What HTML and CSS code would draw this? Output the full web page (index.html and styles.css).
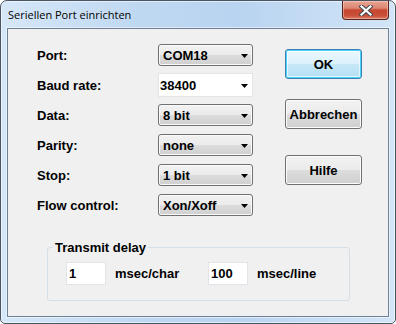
FILE: index.html
```html
<!DOCTYPE html>
<html>
<head>
<meta charset="utf-8">
<link rel="stylesheet" href="styles.css">
</head>
<body>
<div class="window">
  <div class="titlebar">
    <span class="title">Seriellen Port einrichten</span>
    <div class="close">
      <svg width="14" height="11" viewBox="0 0 14 11">
        <path d="M2.5 1.5 L11.5 9.5 M11.5 1.5 L2.5 9.5" stroke="#3d4650" stroke-width="4.2" stroke-linecap="square" fill="none"/>
        <path d="M2.5 1.5 L11.5 9.5 M11.5 1.5 L2.5 9.5" stroke="#ffffff" stroke-width="2.2" stroke-linecap="square" fill="none"/>
      </svg>
    </div>
  </div>
  <div class="client">
    <div class="top">
      <div class="form">
        <span class="label">Port:</span>
        <div class="select"><span>COM18</span><svg class="arrow" width="7" height="4" viewBox="0 0 7 4"><path d="M0 0H7L3.5 4Z" fill="#000"/></svg></div>
        <span class="label">Baud rate:</span>
        <div class="select combo"><span>38400</span><svg class="arrow" width="7" height="4" viewBox="0 0 7 4"><path d="M0 0H7L3.5 4Z" fill="#000"/></svg></div>
        <span class="label">Data:</span>
        <div class="select"><span>8 bit</span><svg class="arrow" width="7" height="4" viewBox="0 0 7 4"><path d="M0 0H7L3.5 4Z" fill="#000"/></svg></div>
        <span class="label">Parity:</span>
        <div class="select"><span>none</span><svg class="arrow" width="7" height="4" viewBox="0 0 7 4"><path d="M0 0H7L3.5 4Z" fill="#000"/></svg></div>
        <span class="label">Stop:</span>
        <div class="select"><span>1 bit</span><svg class="arrow" width="7" height="4" viewBox="0 0 7 4"><path d="M0 0H7L3.5 4Z" fill="#000"/></svg></div>
        <span class="label">Flow control:</span>
        <div class="select"><span>Xon/Xoff</span><svg class="arrow" width="7" height="4" viewBox="0 0 7 4"><path d="M0 0H7L3.5 4Z" fill="#000"/></svg></div>
      </div>
      <div class="buttons">
        <div class="btn default">OK</div>
        <div class="btn gap1">Abbrechen</div>
        <div class="btn gap2">Hilfe</div>
      </div>
    </div>
    <fieldset class="group">
      <legend>Transmit delay</legend>
      <div class="delay-row">
        <div class="field">1</div>
        <span class="unit first">msec/char</span>
        <div class="field">100</div>
        <span class="unit">msec/line</span>
      </div>
    </fieldset>
  </div>
</div>
</body>
</html>
```
FILE: styles.css
```css
body {
  margin: 0;
  background: #ffffff;
}

.window {
  width: 396px;
  height: 324px;
  box-sizing: border-box;
  border: 1px solid #4a5563;
  border-radius: 7px 7px 5px 5px;
  padding: 0 6px 6px;
  background: linear-gradient(to right, #d6e7f8 0%, #bfd8f2 35%, #b9d4f0 60%, #c8def5 85%, #d3e5f7 100%);
  box-shadow: inset 0 0 0 1px rgba(255, 255, 255, 0.55);
  display: flex;
  flex-direction: column;
  font-family: "Liberation Sans", Arial, sans-serif;
}

.titlebar {
  height: 27px;
  display: flex;
  align-items: flex-start;
}

.title {
  margin-top: 6px;
  padding-left: 1px;
  font-family: "Open Sans", "Noto Sans", sans-serif;
  font-size: 11px;
  line-height: 16px;
  color: #000;
}

.close {
  margin-left: auto;
  width: 47px;
  height: 19px;
  box-sizing: border-box;
  border: 1px solid #5a241b;
  border-top: none;
  border-radius: 0 0 4px 4px;
  background: linear-gradient(#e9a595 0%, #db8672 40%, #c7462f 50%, #c95038 80%, #dc7d66 100%);
  box-shadow: inset 0 0 0 1px rgba(255, 220, 210, 0.45);
  display: flex;
  align-items: center;
  justify-content: center;
}

.client {
  flex: 1;
  border: 1px solid #6f8196;
  background: #f0f0f0;
  display: flex;
  flex-direction: column;
  box-shadow: 0 0 0 1px rgba(255, 255, 255, 0.5);
}

.top {
  display: flex;
  align-items: flex-start;
  padding-left: 29px;
}

.form {
  display: grid;
  grid-template-columns: 121px 95px;
  grid-auto-rows: 22px;
  row-gap: 8px;
  padding-top: 15px;
  align-items: center;
}

.label {
  font-size: 13px;
  font-weight: bold;
  color: #000;
}

.select {
  height: 22px;
  box-sizing: border-box;
  border: 1px solid #707070;
  border-radius: 3px;
  background: linear-gradient(#f2f2f2 0%, #ebebeb 50%, #dddddd 50%, #cfcfcf 100%);
  box-shadow: inset 0 0 0 1px #fbfbfb;
  display: flex;
  align-items: center;
  justify-content: space-between;
  padding: 0 4px 0 4px;
  font-size: 13px;
  font-weight: bold;
  color: #000;
}

.select .arrow {
  margin-top: 2px;
}

.select.combo {
  height: 24px;
  margin: -1px 0;
  border: 1px solid #e2e6ea;
  border-radius: 0;
  background: #ffffff;
  box-shadow: none;
  padding-left: 1px;
}

.buttons {
  margin-left: 32px;
  padding-top: 20px;
  display: flex;
  flex-direction: column;
}

.btn {
  width: 77px;
  height: 30px;
  box-sizing: border-box;
  border: 1px solid #707070;
  border-radius: 3px;
  background: linear-gradient(#f2f2f2 0%, #ebebeb 50%, #dddddd 50%, #cfcfcf 100%);
  box-shadow: inset 0 0 0 1px #fcfcfc;
  display: flex;
  align-items: center;
  justify-content: center;
  font-size: 13px;
  font-weight: bold;
  color: #000;
}

.btn.default {
  border-color: #3c7fb1;
  background: linear-gradient(#eaf7fd 0%, #dcf1fc 50%, #c6e8f8 50%, #b4dff4 100%);
  box-shadow: inset 0 0 0 1px #48d4fc, inset 0 0 0 2px rgba(255, 255, 255, 0.6);
}

.btn.gap1 {
  margin-top: 20px;
}

.btn.gap2 {
  margin-top: 26px;
}

.group {
  margin: 24px 0 0 39px;
  width: 303px;
  box-sizing: border-box;
  border: 1px solid #d5dfe5;
  border-radius: 3px;
  padding: 7px 5px 15px;
  min-width: 0;
}

.group legend {
  padding: 0 2px;
  font-size: 13px;
  font-weight: bold;
  line-height: 15px;
  color: #000;
}

.delay-row {
  display: flex;
  align-items: center;
  margin-left: 13px;
}

.field {
  width: 40px;
  height: 23px;
  box-sizing: border-box;
  border: 1px solid #e0e4e9;
  background: #ffffff;
  padding-left: 2px;
  font-size: 13px;
  font-weight: bold;
  line-height: 21px;
  color: #000;
}

.unit {
  margin-left: 9px;
  font-size: 13px;
  font-weight: bold;
  color: #000;
}

.unit.first {
  width: 93px;
}
```
